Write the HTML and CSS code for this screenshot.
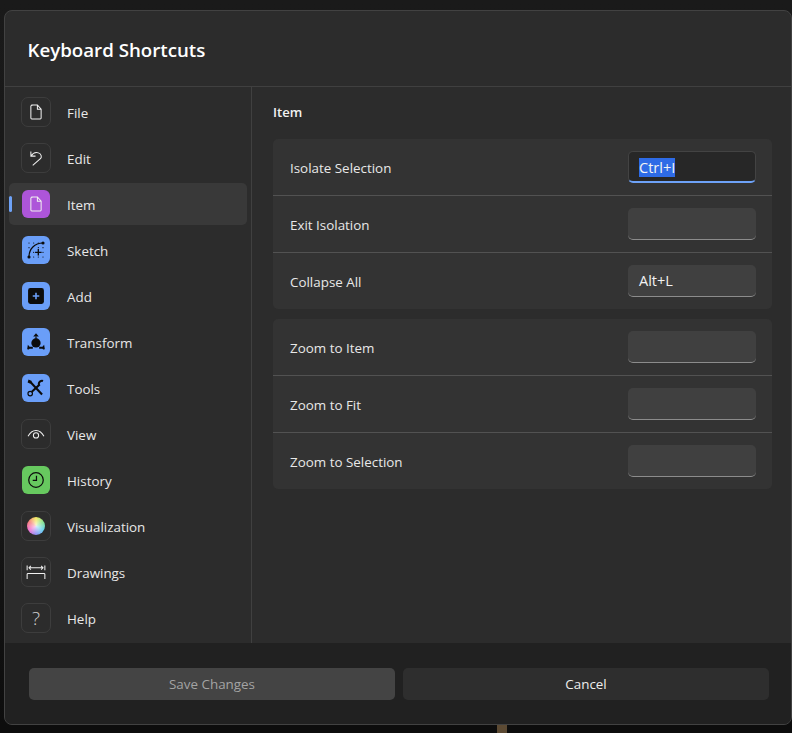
FILE: index.html
```html
<!DOCTYPE html>
<html lang="en">
<head>
<meta charset="utf-8">
<title>Keyboard Shortcuts</title>
<link rel="stylesheet" href="styles.css">
</head>
<body>
<div class="backdrop-stem"></div>
<div class="dialog">
  <header class="head"><h1>Keyboard Shortcuts</h1></header>
  <div class="middle">
    <nav class="side">
      <div class="nav"><span class="ic plain"><svg viewBox="0 0 30 30"><path d="M10.500 7.500h6l4 4.500v9.500a1 1 0 0 1-1 1h-9a1 1 0 0 1-1-1v-13a1 1 0 0 1 1-.5z M16.500 7.500v4.500h4"/></svg></span><span class="lab">File</span></div>
      <div class="nav"><span class="ic plain"><svg viewBox="0 0 30 30"><path d="M9.500 8v5h5 M9.500 13c2-3 5-4.500 8-3.500 3 1 4 4 2.500 6l-8.500 7.500"/></svg></span><span class="lab">Edit</span></div>
      <div class="nav on"><span class="ic purple"><svg viewBox="0 0 30 30"><path d="M10.500 7.500h6l4 4.500v9.500a1 1 0 0 1-1 1h-9a1 1 0 0 1-1-1v-13a1 1 0 0 1 1-.5z M16.500 7.500v4.500h4"/></svg></span><span class="lab">Item</span></div>
      <div class="nav"><span class="ic blue"><svg viewBox="0 0 30 30"><path class="k" d="M7.500 22.500c0-8.500 6-15 15-15"/><path class="k2n" d="M17.500 14v7M14 17.500h7"/><path class="dots" d="M7.500 7.500h.01M12.500 7.500h.01M17.500 7.500h.01M7.500 12.500h.01M17.500 12.500h.01M22.500 12.500h.01M12.500 17.500h.01M22.500 17.500h.01M12.500 22.500h.01M17.500 22.500h.01M22.500 22.500h.01"/><circle class="f" cx="7.500" cy="22.500" r="1.700"/><circle class="f" cx="22.500" cy="7.500" r="1.700"/></svg></span><span class="lab">Sketch</span></div>
      <div class="nav"><span class="ic blue"><svg viewBox="0 0 30 30"><rect class="f" x="6.500" y="6.500" width="17" height="17" rx="2.500"/><path class="b" d="M15 11.500v7M11.500 15h7"/></svg></span><span class="lab">Add</span></div>
      <div class="nav"><span class="ic blue"><svg viewBox="0 0 30 30"><circle class="f" cx="15" cy="16" r="5"/><path class="f" d="M15 5.500l3 3.500h-6zM5.500 22.800l.8-4.800 1.800 2h3.500v2.200h-3.500l-.8.8zM24.500 22.800l-.8-4.800-1.800 2h-3.500v2.200h3.500l.8.8z"/><path class="k" d="M15 9v4"/></svg></span><span class="lab">Transform</span></div>
      <div class="nav"><span class="ic blue"><svg viewBox="0 0 30 30"><path class="k2" d="M9 8.500l12.500 13.500"/><path class="k2" d="M22.500 7.500c-2-.8-4.500.7-4.500 3 0 .6.100 1 .3 1.300L10.500 19"/><circle class="k" cx="8.800" cy="21" r="2.400"/><path class="f" d="M7 6l3.500 1.500-1.500 3-3-1.500z"/></svg></span><span class="lab">Tools</span></div>
      <div class="nav"><span class="ic plain"><svg viewBox="0 0 30 30"><path d="M6.500 17.500c2-4 5-6.300 8.500-6.300s6.500 2.300 8.500 6.300"/><circle cx="15" cy="16.500" r="2.800"/></svg></span><span class="lab">View</span></div>
      <div class="nav"><span class="ic green"><svg viewBox="0 0 30 30"><circle class="k" cx="15" cy="15" r="7.800"/><path class="k" d="M15.500 10.500v5h-4"/></svg></span><span class="lab">History</span></div>
      <div class="nav"><span class="ic plain"><span class="wheel"></span></span><span class="lab">Visualization</span></div>
      <div class="nav"><span class="ic plain"><svg viewBox="0 0 30 30"><path d="M5.500 8v5M24.500 8v5M7.500 10.500h15M9.500 8.500l-2 2 2 2M20.500 8.500l2 2-2 2 M5.500 22.500v-5a1 1 0 0 1 1-1h17a1 1 0 0 1 1 1v5"/></svg></span><span class="lab">Drawings</span></div>
      <div class="nav"><span class="ic plain"><span class="q">?</span></span><span class="lab">Help</span></div>
    </nav>
    <main class="main">
      <h2>Item</h2>
      <section class="card">
        <div class="row"><span class="lab">Isolate Selection</span><div class="field focus"><mark>Ctrl+I</mark></div></div>
        <div class="row"><span class="lab">Exit Isolation</span><div class="field"></div></div>
        <div class="row"><span class="lab">Collapse All</span><div class="field">Alt+L</div></div>
      </section>
      <section class="card">
        <div class="row"><span class="lab">Zoom to Item</span><div class="field"></div></div>
        <div class="row"><span class="lab">Zoom to Fit</span><div class="field"></div></div>
        <div class="row"><span class="lab">Zoom to Selection</span><div class="field"></div></div>
      </section>
    </main>
  </div>
  <footer class="foot">
    <button class="btn save" type="button">Save Changes</button>
    <button class="btn cancel" type="button">Cancel</button>
  </footer>
</div>
</body>
</html>
```
FILE: styles.css
```css
* { box-sizing: border-box; }
html, body { margin: 0; height: 733px; overflow: hidden; }
body {
  background: linear-gradient(#1a1a1a 0, #161616 500px, #0d0d0d 725px);
  padding: 10px 0 8px 4px;
  font-family: "Open Sans", "Noto Sans", sans-serif;
  font-size: 13.400px;
  color: #e8e8e8;
  position: relative;
}
.backdrop-stem {
  position: absolute;
  left: 497px;
  top: 720px;
  width: 10px;
  height: 13px;
  background: #5c4a33;
}
.dialog {
  width: 788px;
  height: 715px;
  background: #2c2c2c;
  border: 1px solid #424242;
  border-radius: 8px;
  display: flex;
  flex-direction: column;
  overflow: hidden;
  position: relative;
}
.head {
  height: 76px;
  border-bottom: 1px solid #404040;
  display: flex;
  align-items: center;
  padding: 2px 23px 0 22.500px;
  flex: none;
}
h1 { margin: 0; font-size: 18.700px; font-weight: 600; color: #fff; }
.middle { flex: 1; display: flex; min-height: 0; }
.side {
  width: 247px;
  flex: none;
  border-right: 1px solid #404040;
  padding: 4px 4px 0 4px;
  display: flex;
  flex-direction: column;
  gap: 4px;
}
.nav {
  height: 42px;
  flex: none;
  display: flex;
  align-items: center;
  gap: 16px;
  padding-left: 12px;
  border-radius: 5px;
  position: relative;
}
.nav.on { background: #393939; }
.nav.on::before {
  content: "";
  position: absolute;
  left: 0;
  top: 13px;
  width: 3px;
  height: 16px;
  border-radius: 2px;
  background: #6ea2f7;
}
.lab { padding-top: 2px; }
.ic {
  width: 30px;
  height: 30px;
  flex: none;
  border-radius: 7px;
  display: flex;
  align-items: center;
  justify-content: center;
  border: 1px solid transparent;
  background-clip: padding-box;
}
.ic svg { width: 28px; height: 28px; fill: none; stroke: #f0f0f0; stroke-width: 1.100; }
.plain { border-color: #3d3d3d; }
.purple { background-color: #ad55d9; }
.blue { background-color: #6a9ef8; }
.green { background-color: #67c95f; }
.ic .k { stroke: #0c0c0c; stroke-width: 1.300; }
.ic .k2 { stroke: #0c0c0c; stroke-width: 2.200; }
.ic .k2n { stroke: #0c0c0c; stroke-width: 1.500; }
.ic .f { fill: #0c0c0c; stroke: none; }
.ic .b { stroke: #6a9ef8; stroke-width: 1.700; }
.ic .dots { stroke: #0c0c0c; stroke-width: 1.300; stroke-linecap: round; }
.wheel {
  width: 18px;
  height: 18px;
  border-radius: 50%;
  background:
    radial-gradient(circle, rgba(255,255,255,.75), rgba(255,255,255,0) 70%),
    conic-gradient(#f3e85c, #7fe08a, #5fd0f0, #8a8cf5, #f06cd0, #f57878, #f3e85c);
}
.q { font-size: 19px; font-weight: 300; color: #cfcfcf; line-height: 1; }
.main { flex: 1; padding: 14px 20px 0 21px; }
h2 { margin: 0 0 15px; font-size: 13.100px; font-weight: 600; line-height: 23px; color: #f2f2f2; }
.card {
  background: #333;
  border-radius: 5px;
  margin-bottom: 10px;
  width: 499px;
}
.row {
  height: 57px;
  display: flex;
  align-items: center;
  justify-content: space-between;
  padding: 0 16px 0 17px;
  border-top: 1px solid #525252;
}
.row:first-child { border-top: 0; height: 56px; }
.field {
  width: 128px;
  height: 32px;
  background: #404040;
  border-radius: 5px;
  border-bottom: 1px solid #8c8c8c;
  padding: 0 11px;
  display: flex;
  align-items: center;
  color: #f2f2f2;
  font-size: 14.500px;
}
.field.focus {
  background: #272727;
  border: 1px solid #434343;
  border-bottom: 2px solid #6ea2f7;
  padding: 1px 10px 0;
}
mark { background: #2e6be6; color: #f4f4f4; line-height: 19px; }
.foot {
  height: 81px;
  flex: none;
  background: #212121;
  display: flex;
  gap: 8px;
  padding: 25px 0 0 24px;
}
.btn {
  width: 366px;
  height: 32px;
  border: 0;
  border-radius: 5px;
  font: inherit;
  padding: 0;
}
.save { background: #444; color: #a3a3a3; }
.cancel { background: #2e2e2e; color: #ededed; }
```
